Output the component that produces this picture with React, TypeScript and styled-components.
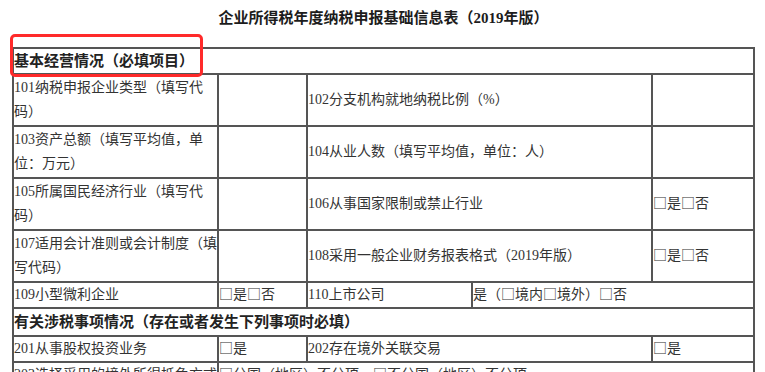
import React from "react";
import styled, { createGlobalStyle } from "styled-components";

const GlobalStyle = createGlobalStyle`
  html, body {
    margin: 0;
    padding: 0;
    background: #ffffff;
  }

  body {
    font-family: "Liberation Serif", "Noto Sans CJK SC", serif;
    color: #333333;
  }
`;

const COLS = [205, 89, 165, 180, 102];

// full-width checkbox glyph, as in the printed form
const Box = () => <CheckStyled>□</CheckStyled>;

export default function App() {
  return (
    <>
      <GlobalStyle />
      <PageStyled>
        <TitleStyled>企业所得税年度纳税申报基础信息表（2019年版）</TitleStyled>

        <SheetStyled>
          <colgroup>
            {COLS.map((w, i) => (
              <ColStyled key={i} $w={w} />
            ))}
          </colgroup>
          <tbody>
            <tr>
              <SectionCell colSpan={5}>基本经营情况（必填项目）</SectionCell>
            </tr>
            <tr>
              <Cell $py={1}>101纳税申报企业类型（填写代码）</Cell>
              <Cell $py={1}></Cell>
              <Cell $py={1} colSpan={2}>102分支机构就地纳税比例（%）</Cell>
              <Cell $py={1}></Cell>
            </tr>
            <tr>
              <Cell $py={1}>103资产总额（填写平均值，单位：万元）</Cell>
              <Cell $py={1}></Cell>
              <Cell $py={1} colSpan={2}>104从业人数（填写平均值，单位：人）</Cell>
              <Cell $py={1}></Cell>
            </tr>
            <tr>
              <Cell $py={1}>105所属国民经济行业（填写代码）</Cell>
              <Cell $py={1}></Cell>
              <Cell $py={1} colSpan={2}>106从事国家限制或禁止行业</Cell>
              <Cell $py={1}>
                <Box />是<Box />否
              </Cell>
            </tr>
            <tr>
              <Cell $py={1}>107适用会计准则或会计制度（填写代码）</Cell>
              <Cell $py={1}></Cell>
              <Cell $py={1} colSpan={2}>108采用一般企业财务报表格式（2019年版）</Cell>
              <Cell $py={1}>
                <Box />是<Box />否
              </Cell>
            </tr>
            <tr>
              <Cell>109小型微利企业</Cell>
              <Cell>
                <Box />是<Box />否
              </Cell>
              <Cell>110上市公司</Cell>
              <Cell colSpan={2}>
                是（<Box />境内<Box />境外）<Box />否
              </Cell>
            </tr>
            <tr>
              <SectionCell $py={1} colSpan={5}>
                有关涉税事项情况（存在或者发生下列事项时必填）
              </SectionCell>
            </tr>
            <tr>
              <Cell>201从事股权投资业务</Cell>
              <Cell>
                <Box />是
              </Cell>
              <Cell colSpan={2}>202存在境外关联交易</Cell>
              <Cell>
                <Box />是
              </Cell>
            </tr>
            <tr>
              <Cell>203选择采用的境外所得抵免方式</Cell>
              <Cell colSpan={4}>
                <Box />分国（地区）不分项　<Box />不分国（地区）不分项
              </Cell>
            </tr>
            <tr>
              <Cell>204有限合伙制创业投资企业的法人合伙人</Cell>
              <Cell>
                <Box />是
              </Cell>
              <Cell colSpan={2}>205创业投资企业</Cell>
              <Cell>
                <Box />是
              </Cell>
            </tr>
          </tbody>
        </SheetStyled>

        {/* annotation drawn over the first section header */}
        <HighlightStyled />
      </PageStyled>
    </>
  );
}

const PageStyled = styled.div`
  position: relative;
  box-sizing: border-box;
  width: 765px;
  padding: 8px 10px 0 12px;
`;

const TitleStyled = styled.h1`
  margin: 0 0 19px;
  font-size: 15px;
  font-weight: 700;
  line-height: 20px;
  text-align: center;
  color: #1c1c1c;
`;

const SheetStyled = styled.table`
  width: 743px;
  table-layout: fixed;
  border-spacing: 0;
  border: 1px solid #555555;
`;

const ColStyled = styled.col<{ $w: number }>`
  width: ${(p) => p.$w}px;
`;

const Cell = styled.td<{ $py?: number }>`
  border: 1px solid #555555;
  padding: ${(p) => p.$py ?? 0}px 0;
  font-size: 14px;
  line-height: 24px;
  vertical-align: middle;
  text-align: left;
  color: #333333;
`;

const SectionCell = styled(Cell)`
  font-size: 15px;
  font-weight: 700;
  color: #222222;
`;

const CheckStyled = styled.span`
  font-family: "Noto Sans CJK SC", sans-serif;
  line-height: 1;
`;

const HighlightStyled = styled.div`
  position: absolute;
  left: 10px;
  top: 34px;
  width: 193px;
  height: 43px;
  box-sizing: border-box;
  border: 3px solid #ff2a2a;
  border-radius: 5px;
  pointer-events: none;
`;
